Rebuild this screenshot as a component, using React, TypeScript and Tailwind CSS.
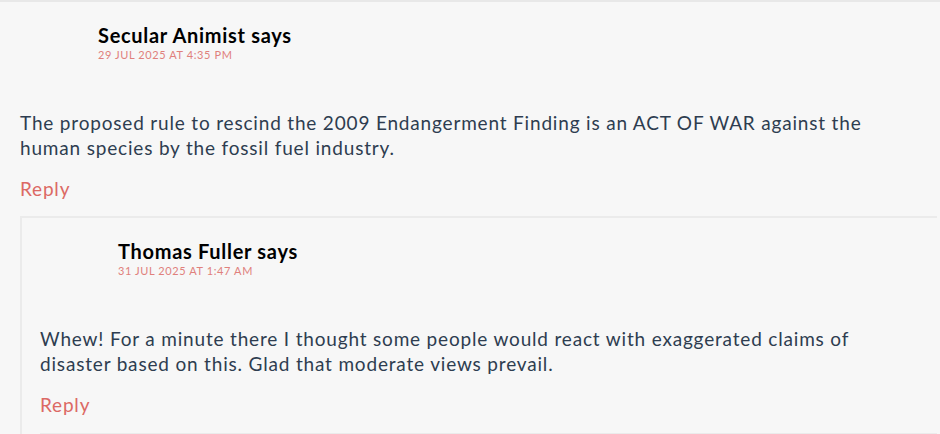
const font = { fontFamily: 'Lato, "Open Sans", sans-serif' }

type CommentProps = {
  author: string
  date: string
  text: string
  children?: React.ReactNode
}

function Comment({ author, date, text, children }: CommentProps) {
  return (
    <div>
      <div className="flex pt-[20px]">
        <div className="w-[78px] shrink-0" />
        <div>
          <div className="text-[20px] leading-[26px] font-bold tracking-[0.7px] text-black">{author} says</div>
          <div className="text-[11px] leading-[14px] tracking-[0.6px] uppercase text-[#e0807c]">{date}</div>
        </div>
      </div>
      <p className="mt-[48px] text-[19px] leading-[25px] tracking-[0.82px] text-[#2e3d50] pr-6">{text}</p>
      <div className="mt-[16px] text-[19px] leading-[26px] tracking-[0.8px] text-[#dc6964]">Reply</div>
      {children}
    </div>
  )
}

export default function App() {
  return (
    <div style={font} className="h-[434px] overflow-hidden bg-[#f7f7f7] border-t-2 border-[#e8e8e8] pl-5">
      <Comment
        author="Secular Animist"
        date="29 Jul 2025 at 4:35 pm"
        text="The proposed rule to rescind the 2009 Endangerment Finding is an ACT OF WAR against the human species by the fossil fuel industry."
      >
        <div className="mt-[14px] mr-[3px] border-t-2 border-l-2 border-[#ebebeb] pl-[18px]">
          <Comment
            author="Thomas Fuller"
            date="31 Jul 2025 at 1:47 am"
            text="Whew! For a minute there I thought some people would react with exaggerated claims of disaster based on this. Glad that moderate views prevail."
          >
            <div className="mt-[15px] border-t-2 border-[#ebebeb] h-4" />
          </Comment>
        </div>
      </Comment>
    </div>
  )
}
